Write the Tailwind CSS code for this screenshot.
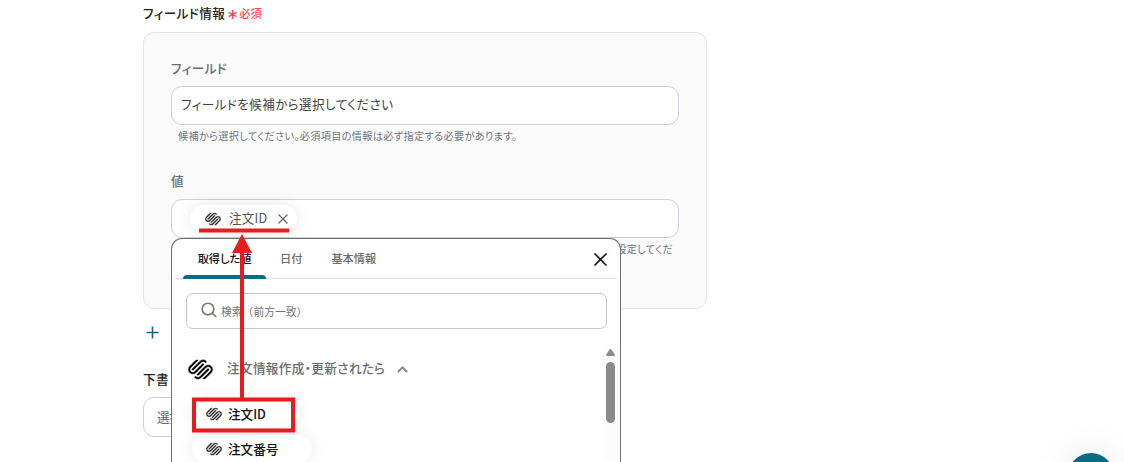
<!DOCTYPE html>
<html lang="ja">
<head>
    <meta charset="UTF-8">
    <meta name="viewport" content="width=device-width, initial-scale=1.0">
    <title>フィールド情報</title>
    <script src="https://cdn.jsdelivr.net/npm/@tailwindcss/browser@4"></script>
</head>
<body class="relative h-screen overflow-hidden bg-white font-['Noto_Sans_CJK_JP',sans-serif] text-[12.6px] text-[#6b6b6b] [font-feature-settings:'palt']">
    <svg class="hidden">
        <symbol id="logo" viewBox="0 0 24 24">
            <path stroke="#fff" stroke-width=".5" d="M22.655 8.719c-1.802-1.801-4.726-1.801-6.564 0l-7.351 7.35c-.45.45-.45 1.2 0 1.65.45.449 1.2.449 1.65 0l7.351-7.351c.899-.899 2.362-.899 3.264 0 .9.9.9 2.364 0 3.264l-7.239 7.239c.9.899 2.362.899 3.263 0l5.589-5.589c1.836-1.838 1.836-4.763.037-6.563zm-2.475 2.437c-.451-.45-1.201-.45-1.65 0l-7.354 7.389c-.9.899-2.361.899-3.262 0-.45-.45-1.2-.45-1.65 0s-.45 1.2 0 1.649c1.801 1.801 4.726 1.801 6.564 0l7.351-7.35c.449-.487.449-1.239.001-1.688zm-2.439-7.35c-1.801-1.801-4.726-1.801-6.564 0l-7.351 7.351c-.45.449-.45 1.199 0 1.649s1.2.45 1.65 0l7.395-7.351c.9-.899 2.371-.899 3.27 0 .451.45 1.201.45 1.65 0 .421-.487.421-1.199-.05-1.649zm-2.475 2.437c-.45-.45-1.2-.45-1.65 0l-7.351 7.389c-.899.9-2.363.9-3.265 0-.9-.899-.9-2.363 0-3.264l7.239-7.239c-.9-.9-2.362-.9-3.263 0L1.35 8.719c-1.8 1.8-1.8 4.725 0 6.563 1.801 1.801 4.725 1.801 6.564 0l7.35-7.35c.451-.488.451-1.238.002-1.689z"/>
        </symbol>
    </svg>

    <main class="ml-[143px] h-full w-[564px] overflow-hidden pt-[3px]">
        <div class="flex h-5 items-center">
            <h2 class="font-medium tracking-[0.4px] text-[#222]">フィールド情報</h2>
            <svg class="mt-[3px] ml-[3px] size-[9px] text-[#ff4757]" viewBox="0 0 9 9" fill="none" stroke="currentColor" stroke-width="1.4"><path d="M4.5 0v9M.6 2.3l7.8 4.4M.6 6.7l7.8-4.4"/></svg>
            <span class="ml-0.5 text-[11.3px] font-medium text-[#ff4757]">必須</span>
        </div>

        <section class="mt-[9px] h-[277px] rounded-[11px] border border-[#e4e4e4] bg-[#fafafa] px-[27px] pt-[26px]">
            <label class="block h-[17px] leading-[17px] font-medium tracking-[0.4px]">フィールド</label>
            <div class="mt-2.5 flex h-[39px] items-center rounded-[11px] border border-[#cbd0d9] bg-white px-[9px] pb-[3px] tracking-[0.4px] text-[#444]">フィールドを候補から選択してください</div>
            <p class="mt-[3px] h-4 pl-[7px] text-[10.2px] leading-4 tracking-[0.3px] whitespace-nowrap text-[#6c757d]">候補から選択してください。必須項目の情報は必ず指定する必要があります。</p>

            <label class="mt-[28px] block h-[17px] leading-[17px] font-medium">値</label>
            <div class="mt-2.5 flex h-[39px] items-center rounded-[11px] border border-[#cbd0d9] bg-white pl-[18px]">
                <span class="flex h-[27px] w-[107px] items-center rounded-full bg-white pl-[15px] text-[#555] shadow-[0_0_16px_rgba(0,0,0,0.1)]">
                    <svg class="size-4 fill-[#222]"><use href="#logo"/></svg>
                    <span class="ml-2 tracking-[0.2px]">注文ID</span>
                    <svg class="ml-[11px] size-2.5" viewBox="0 0 10 10" fill="none" stroke="#666" stroke-width="1.2"><path d="M.5.5l9 9M9.5.5l-9 9"/></svg>
                </span>
            </div>
            <p class="mt-[3px] h-4 pr-[6px] text-right text-[10.2px] leading-4 tracking-[0.3px] whitespace-nowrap text-[#6c757d]">候補から選択するか、値を設定してくだ</p>
        </section>

        <button class="mt-[17px] ml-[3px] block">
            <svg class="size-[13px]" viewBox="0 0 13 13" fill="none" stroke="#0b6b83" stroke-width="1.6"><path d="M6.5.5v12M.5 6.5h12"/></svg>
        </button>
        <h2 class="mt-[31px] h-[18px] leading-[18px] font-medium tracking-[0.4px] text-[#222]">下書</h2>
        <div class="mt-[9px] flex h-10 w-[300px] items-center rounded-[11px] border border-[#cbd0d9] bg-white px-[13px] text-[#666]">選択してください</div>
    </main>

    <!-- value picker -->
    <div class="absolute top-[238px] left-[171px] h-[224px] w-[450px] overflow-hidden rounded-t-[11px] border border-b-0 border-[#6f6f6f] bg-white">
        <div class="mx-[3px] flex h-10 items-center border-b border-[#e2e2e2] text-[11.2px] font-medium">
            <div class="relative ml-2 flex h-10 w-[83px] items-center justify-center text-[#111]">
                取得した値
                <span class="absolute inset-x-0 bottom-0 h-1 rounded-t bg-[#0b6b83]"></span>
            </div>
            <span class="ml-[14px]">日付</span>
            <span class="ml-[29px]">基本情報</span>
            <svg class="mt-0.5 mr-2.5 ml-auto size-[13px]" viewBox="0 0 13 13" fill="none" stroke="#111" stroke-width="1.7" stroke-linecap="round"><path d="M1 1l11 11M12 1L1 12"/></svg>
        </div>
        <div class="mx-[14px] mt-[14px] flex h-9 w-[421px] items-center rounded-[7px] border border-[#c6c6c6] pl-[14px] text-[10.8px] text-[#757575]">
            <svg class="mb-0.5 size-4" viewBox="0 0 16 16" fill="none" stroke="#777" stroke-width="1.6" stroke-linecap="round"><circle cx="7" cy="7" r="5.8"/><path d="M11.3 11.3l3.5 3.2"/></svg>
            <span class="ml-1 [font-feature-settings:'palt'_0]">検索（前方一致）</span>
        </div>
        <div class="mt-[15px] flex">
            <div class="w-[431px]">
                <div class="flex h-[50px] items-center pl-4">
                    <svg class="size-[25px] fill-black"><use href="#logo"/></svg>
                    <h3 class="mb-0.5 ml-[14px] text-[12.6px] font-medium tracking-[0.35px]">注文情報作成・更新されたら</h3>
                    <svg class="ml-3 size-[11px]" viewBox="0 0 11 11" fill="none" stroke="#888" stroke-width="2"><path d="M.8 8l4.7-4.6L10.2 8"/></svg>
                </div>
                <ul class="mt-[6px] ml-5 flex flex-col items-start gap-[7px] font-medium text-[#111]">
                    <li class="flex h-7 w-[107px] items-center rounded-full bg-white pl-3.5 shadow-[0_0_16px_rgba(0,0,0,0.1)]">
                        <svg class="size-4 fill-[#222]"><use href="#logo"/></svg>
                        <span class="ml-1.5">注文ID</span>
                    </li>
                    <li class="flex h-7 w-[120px] items-center rounded-full bg-white pl-3.5 shadow-[0_0_16px_rgba(0,0,0,0.1)]">
                        <svg class="size-4 fill-[#222]"><use href="#logo"/></svg>
                        <span class="ml-1.5">注文番号</span>
                    </li>
                </ul>
            </div>
            <div class="flex h-[118px] w-[15px] flex-col items-center bg-[#fcfcfc] pt-[5px]">
                <svg class="h-[7px] w-[9px]" viewBox="0 0 9 7" fill="#8b8b8b"><path d="M3.7.5Q4.5-.4 5.3.5L8.8 5.6Q9.2 7 8 7H1Q-.2 7 .2 5.6z"/></svg>
                <span class="mt-1.5 h-[61px] w-[9px] rounded-full bg-[#8b8b8b]"></span>
            </div>
        </div>
    </div>

    <!-- chat launcher -->
    <div class="absolute right-0 bottom-0 h-[62px] w-[100px] overflow-hidden">
        <div class="mt-[53px] ml-11 size-[46px] rounded-full bg-[#0b6b83] shadow-[0_0_36px_rgba(0,0,0,0.1)]"></div>
    </div>

    <!-- arrow from the list item up to the chip -->
    <svg class="absolute top-0 left-0 h-[462px] w-[320px]" fill="#e71d1d">
        <path d="M199 228.5h90v4h-90z"/>
        <path d="M242 234l10 19h-8v145h-4V253h-8z"/>
        <path d="M194 399.5h99v31h-99z" fill="none" stroke="#e71d1d" stroke-width="4"/>
    </svg>
</body>
</html>
